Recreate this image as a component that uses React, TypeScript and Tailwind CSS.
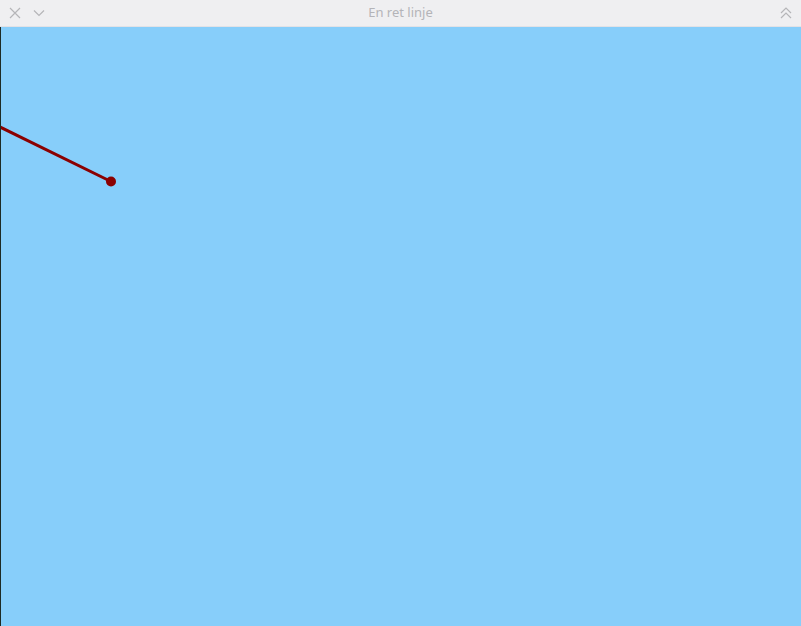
export default function App() {
  return (
    <div className="flex flex-col w-[801px] h-[626px] overflow-hidden bg-[#87cefa]" style={{ fontFamily: '"Noto Sans", "Open Sans", sans-serif' }}>
      <div className="grid grid-cols-[80px_1fr_80px] items-center h-[27px] bg-[#efeff1] border-b border-[#e2e2e6] shrink-0">
        <div className="flex items-center gap-[12px] pl-[9px]">
          <svg width="12" height="12" viewBox="0 0 12 12" fill="none" stroke="#b5b5b8" strokeWidth="1.2">
            <path d="M1 1 L11 11 M11 1 L1 11" />
          </svg>
          <svg width="12" height="12" viewBox="0 0 12 12" fill="none" stroke="#b5b5b8" strokeWidth="1.2">
            <path d="M1 3.5 L6 8.5 L11 3.5" />
          </svg>
        </div>
        <div className="text-center text-[13px] text-[#b4b4b8]">En ret linje</div>
        <div className="flex justify-end pr-[9px]">
          <svg width="12" height="12" viewBox="0 0 12 12" fill="none" stroke="#b5b5b8" strokeWidth="1.2">
            <path d="M1 6 L6 1 L11 6 M1 11 L6 6 L11 11" />
          </svg>
        </div>
      </div>
      <div className="relative flex-1 border-l border-[#1d2b24]">
        <svg width="800" height="599" className="absolute inset-0">
          <line x1="-1" y1="100" x2="110" y2="154.5" stroke="#8b0000" strokeWidth="3" />
          <circle cx="110" cy="154.5" r="5" fill="#8b0000" />
        </svg>
      </div>
    </div>
  );
}
